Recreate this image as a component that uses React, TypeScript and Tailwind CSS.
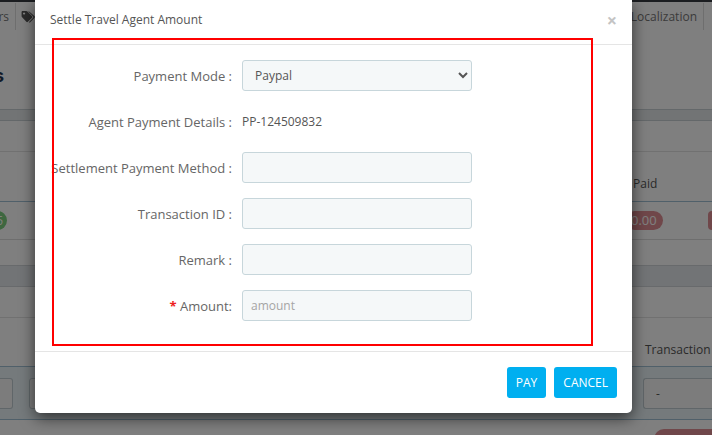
import { useState } from "react";

const inputClass =
  "h-[31px] w-[230px] rounded-[3px] border border-[#c7d6db] bg-[#f5f8f9] px-2 text-xs text-[#555] outline-none placeholder:text-[#a5a5a5]";

const labelClass = "w-[181px] shrink-0 whitespace-nowrap text-right text-[13px] leading-8 text-[#666]";

const buttonClass = "h-[31px] rounded-[3px] bg-[#00aff0] px-[9px] text-xs text-white";

const fields = [
  { id: "method", label: "Settlement Payment Method :" },
  { id: "transaction", label: "Transaction ID :" },
  { id: "remark", label: "Remark :" },
];

const TagsIcon = () => (
  <svg className="h-3 w-[15px] shrink-0" viewBox="0 0 15 13" fill="#555">
    <path fillRule="evenodd" d="M0 1.2C0 .5.5 0 1.2 0H5c.5 0 1 .2 1.4.6l5 5c.5.5.5 1.1 0 1.6l-4.600 4.500c-.5.5-1.100.5-1.600 0l-4.600-4.900C.2 6.400 0 6 0 5.500zM2.700 1.500a1.200 1.200 0 1 0 .01 0z" />
    <path d="M7 .2c.7 0 1.200.2 1.600.6l5.500 5c.5.5.5 1.100 0 1.600l-4.700 4.700c-.5.5-1.100.5-1.600.1l4.500-4.700c.6-.6.6-1.300 0-1.900z" />
  </svg>
);

const Backdrop = () => (
  <div className="min-h-screen overflow-hidden bg-white text-xs text-[#555]">
    <div className="h-0.5 bg-[#363a41]" />

    {/* Main menu */}
    <nav className="flex h-[29px] items-center justify-between">
      <div className="flex h-[27px] items-center">
        <a href="#orders" className="flex h-full w-4 items-center justify-end border-r border-[#ddd] pr-1.5 text-[#777]">
          rs
        </a>
        <a href="#catalog" aria-label="Catalog" className="pl-[5px]">
          <TagsIcon />
        </a>
      </div>
      <a href="#localization" className="mr-2 flex h-[27px] items-center border-r border-[#ddd] pr-1.5 text-[#777]">
        Localization
      </a>
    </nav>

    <div className="flex h-[78px] w-1 items-center justify-end pt-3">
      <h1 className="font-[Inter] text-lg font-bold text-[#25354f]">s</h1>
    </div>

    <div className="h-3 border-y border-[#c8d0d4] bg-[#e4e8ea]" />

    {/* Totals */}
    <div className="h-[31px] border-b border-[#e2e2e2]" />
    <table className="w-full table-fixed">
      <thead>
        <tr className="h-[49px] border-b border-[#a0c0d4]">
          <th />
          <th className="w-[79px] pt-4 text-left font-normal">Paid</th>
        </tr>
      </thead>
      <tbody>
        <tr className="h-[38px] border-b border-[#ddd]">
          <td>
            <div className="flex w-[7px] justify-end">
              <span className="rounded-r-full bg-[#7ccf80] pr-1 leading-[19px] text-white">5</span>
            </div>
          </td>
          <td>
            <div className="flex items-center justify-between">
              <span className="-ml-2 rounded-full bg-[#e08f95] px-1.5 text-[13px] leading-[19px] text-white">0.00</span>
              <span className="h-[19px] w-1 rounded-l-full bg-[#e08f95]" />
            </div>
          </td>
        </tr>
      </tbody>
    </table>
    <div className="h-[25px]" />

    <div className="h-[22px] border-y border-[#d0d4d8] bg-[#e4e8ec]" />

    {/* Transactions */}
    <div className="h-[31px] border-b border-[#e2e2e2]" />
    <table className="w-full table-fixed">
      <thead>
        <tr className="h-[49px] border-b border-[#a0c0d4]">
          <th className="w-[13px]" />
          <th />
          <th className="w-[69px] whitespace-nowrap pt-4 pl-0.5 text-left font-normal">Transaction</th>
        </tr>
      </thead>
      <tbody>
        <tr className="h-[53px] border-b border-[#a0c0d4] bg-[#eaf4f8]">
          <td>
            <div className="h-[31px] rounded-r-[3px] border border-l-0 border-[#c0cdd2] bg-[#f8f8f8]" />
          </td>
          <td className="pl-4 pr-8">
            <div className="h-[31px] rounded-[3px] border border-[#c0cdd2] bg-[#f8f8f8]" />
          </td>
          <td>
            <div className="h-[31px] rounded-l-[3px] border border-r-0 border-[#c0cdd2] bg-[#f8f8f8] pl-3 leading-[30px]">-</div>
          </td>
        </tr>
      </tbody>
    </table>
    <div className="mt-[9px] ml-auto h-5 w-[58px] rounded-l-full bg-[#e08f95]" />
  </div>
);

const SettleDialog = () => {
  const [mode, setMode] = useState("Paypal");

  return (
    <div
      role="dialog"
      aria-labelledby="settle-title"
      className="rounded-b-[5px] bg-white text-[#555] shadow-[0_5px_15px_rgba(0,0,0,0.6)]"
    >
      <header className="flex h-[45px] items-center justify-between border-b border-[#e5e5e5] px-[15px] pb-1">
        <h2 id="settle-title" className="text-xs text-[#555]">Settle Travel Agent Amount</h2>
        <button type="button" aria-label="Close" className="text-lg leading-none font-bold text-[#c4c4c4]">
          ×
        </button>
      </header>

      <form className="flex flex-col gap-[15px] px-4 pt-[15px] pb-[30px]">
        <div className="flex h-[31px] gap-2.5">
          <label htmlFor="mode" className={labelClass}>Payment Mode :</label>
          <select id="mode" value={mode} onChange={(e) => setMode(e.target.value)} className={inputClass}>
            <option>Paypal</option>
            <option>Bank Transfer</option>
          </select>
        </div>
        <div className="flex h-[31px] gap-2.5">
          <span className={labelClass}>Agent Payment Details :</span>
          <span className="text-xs leading-8">PP-124509832</span>
        </div>
        {fields.map((field) => (
          <div key={field.id} className="flex h-[31px] gap-2.5">
            <label htmlFor={field.id} className={labelClass}>{field.label}</label>
            <input id={field.id} type="text" className={inputClass} />
          </div>
        ))}
        <div className="flex h-[31px] gap-2.5">
          <label htmlFor="amount" className={labelClass}>
            <span className="font-bold text-[#ee2020]">*</span> Amount:
          </label>
          <input id="amount" type="text" placeholder="amount" className={inputClass} />
        </div>
      </form>

      <footer className="flex justify-end gap-2 border-t border-[#e5e5e5] p-[15px]">
        <button type="button" className={buttonClass}>PAY</button>
        <button type="button" className={buttonClass}>CANCEL</button>
      </footer>
    </div>
  );
};

export default function App() {
  return (
    <div className="relative font-['Open_Sans',sans-serif]">
      <Backdrop />
      <div className="absolute inset-0 bg-black/50 pr-20 pl-[35px]">
        <div className="relative">
          <SettleDialog />
          {/* Highlight frame around the form */}
          <div className="pointer-events-none absolute top-[38px] right-[39px] bottom-[67px] left-[17px] border-2 border-[#ff0000]" />
        </div>
      </div>
    </div>
  );
}
